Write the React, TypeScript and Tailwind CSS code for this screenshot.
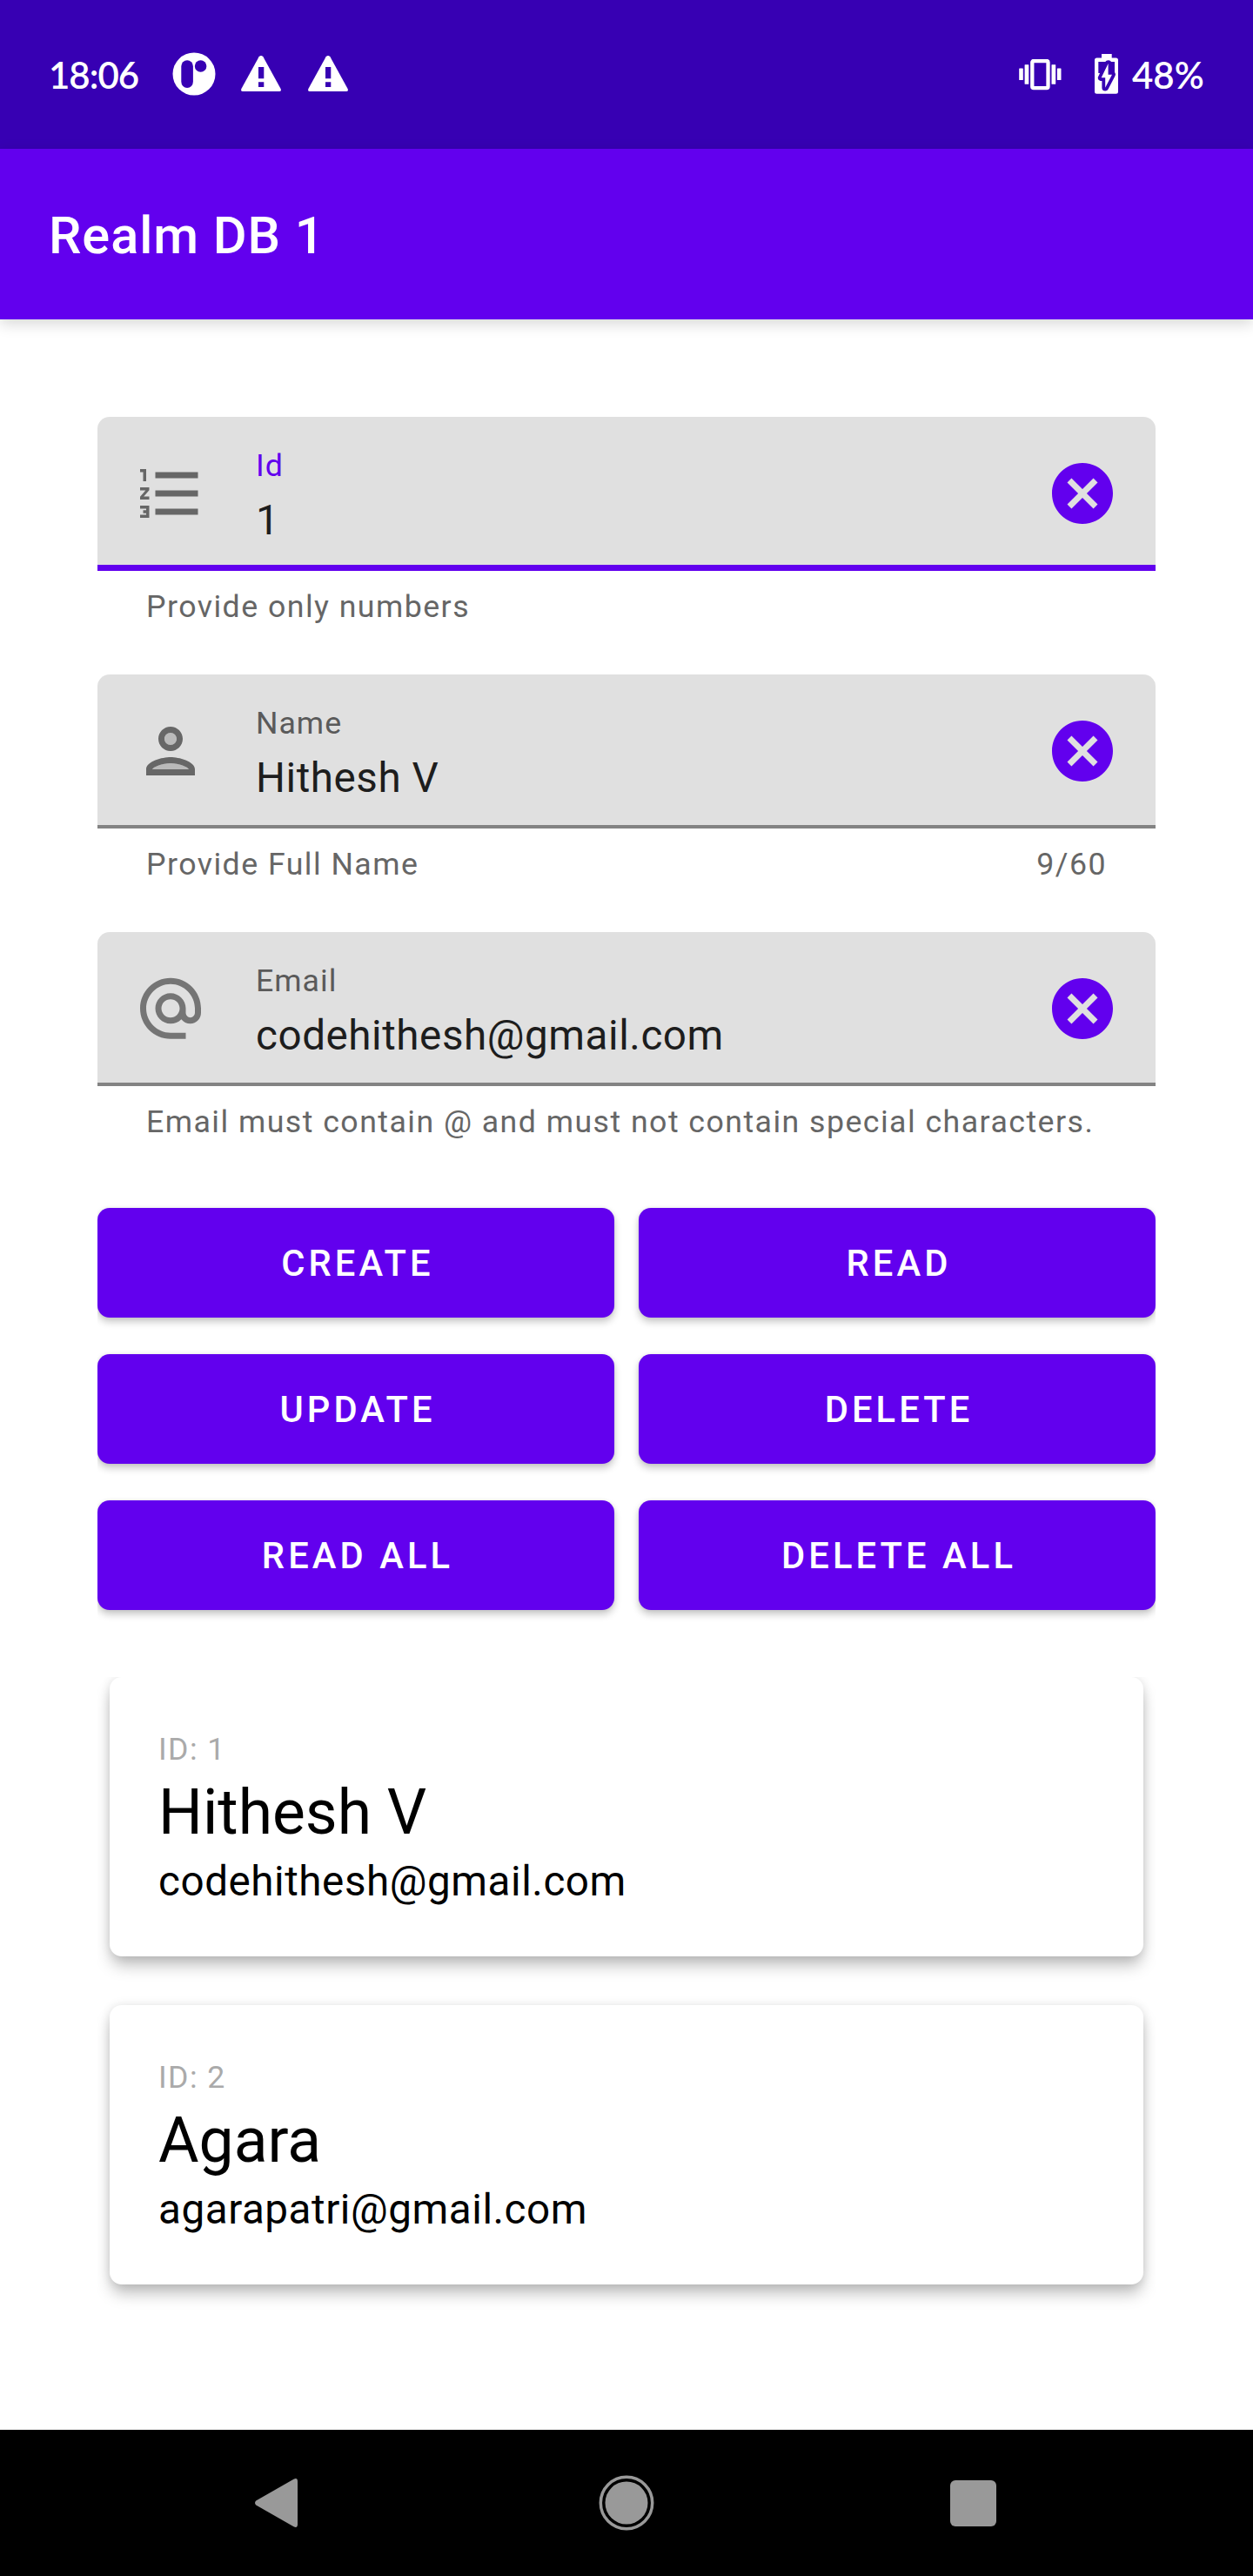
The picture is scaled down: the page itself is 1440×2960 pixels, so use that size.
import type { ReactNode } from "react";

function RoundLogo() {
  return (
    <svg width="50" height="50" viewBox="0 0 50 50">
      <circle cx="25" cy="25" r="24.5" fill="#fff" />
      <rect x="10.3" y="9.3" width="13.6" height="31.6" rx="6.8" fill="#3700b3" />
      <circle cx="32.6" cy="16" r="6.8" fill="#3700b3" />
    </svg>
  );
}

function Warning() {
  return (
    <svg width="46" height="42" viewBox="0 0 46 42">
      <path
        d="M20.6 1.3Q23-1.2 25.4 1.3L45.6 38Q46.6 41 44 41H2Q-.6 41 .4 38Z"
        fill="#fff"
      />
      <path d="M20 13h6.3v13.3H20zM20 30.2h6.3v5.8H20z" fill="#3700b3" />
    </svg>
  );
}

function Vibrate() {
  return (
    <svg width="49" height="36" viewBox="0 0 49 36" fill="#fff">
      <rect x="0.2" y="10.5" width="4.6" height="13.6" rx="0.6" />
      <rect x="6.6" y="6.2" width="4.7" height="22.6" rx="0.6" />
      <rect x="15.3" y="2" width="18.2" height="31.2" rx="1.6" fill="none" stroke="#fff" strokeWidth="4.3" />
      <rect x="37.5" y="6.2" width="4.7" height="22.6" rx="0.6" />
      <rect x="43.9" y="10.5" width="4.6" height="13.6" rx="0.6" />
    </svg>
  );
}

function Battery() {
  return (
    <svg width="27" height="46" viewBox="0 0 27 46">
      <path d="M8 0h11.7v4.6H24.500q2.500 0 2.500 2.500v36.100q0 2.500-2.500 2.500H2.500q-2.500 0-2.500-2.500V7.100q0-2.500 2.500-2.500H8z" fill="#fff" />
      <path d="M4.300 9h18.700v13H4.300z" fill="#3700b3" />
      <path
        d="M15.600 11 7.700 27.300H12.200V38.700L20 23.700H15.600Z"
        fill="#3700b3"
        stroke="#3700b3"
        strokeWidth="7.600"
        strokeLinejoin="round"
      />
      <path d="M15.600 11 7.700 27.300H12.200V38.700L20 23.700H15.600Z" fill="#fff" />
    </svg>
  );
}

function ListNumbered() {
  return (
    <svg width="84" height="84" viewBox="0 0 24 24" fill="#676767">
      <path d="M2 17h2v.5H3v1h1v.5H2v1h3v-4H2v1zm1-9h1V4H2v1h1v3zm-1 3h1.800L2 13.100v.9h3v-1H3.200L5 10.900V10H2v1zm5-6v2h14V5H7zm0 14h14v-2H7v2zm0-6h14v-2H7v2z" />
    </svg>
  );
}

function Person() {
  return (
    <svg width="84" height="84" viewBox="0 0 24 24" fill="#676767">
      <path d="M12 16c-2.690 0-5.770 1.280-6 2h12c-.2-.71-3.300-2-6-2z" fill="#bababa" />
      <circle cx="12" cy="8" r="2" fill="#bababa" />
      <path d="M12 14c-2.670 0-8 1.340-8 4v2h16v-2c0-2.660-5.330-4-8-4zm-6 4c.22-.72 3.310-2 6-2 2.700 0 5.800 1.290 6 2H6zm6-6c2.210 0 4-1.790 4-4s-1.790-4-4-4-4 1.790-4 4 1.790 4 4 4zm0-6c1.100 0 2 .9 2 2s-.9 2-2 2-2-.9-2-2 .9-2 2-2z" />
    </svg>
  );
}

function At() {
  return (
    <svg width="84" height="84" viewBox="0 0 24 24" fill="#757575">
      <path d="M12 1.950c-5.520 0-10 4.480-10 10s4.480 10 10 10h5v-2h-5c-4.340 0-8-3.660-8-8s3.660-8 8-8 8 3.660 8 8v1.430c0 .79-.71 1.570-1.500 1.570s-1.500-.78-1.500-1.570v-1.430c0-2.760-2.240-5-5-5s-5 2.240-5 5 2.240 5 5 5c1.380 0 2.640-.56 3.540-1.470.65.89 1.770 1.470 2.960 1.470 1.970 0 3.500-1.600 3.500-3.570v-1.430c0-5.520-4.480-10-10-10zm0 13c-1.660 0-3-1.340-3-3s1.340-3 3-3 3 1.340 3 3-1.340 3-3 3z" />
    </svg>
  );
}

function Clear() {
  return (
    <svg width="84" height="84" viewBox="0 0 24 24" fill="#6200ee">
      <path d="M12 2C6.470 2 2 6.470 2 12s4.470 10 10 10 10-4.470 10-10S17.530 2 12 2zm5 13.590L15.590 17 12 13.410 8.410 17 7 15.590 10.590 12 7 8.410 8.410 7 12 10.590 15.590 7 17 8.410 13.410 12 17 15.590z" />
    </svg>
  );
}

type FieldProps = {
  icon: ReactNode;
  label: string;
  value: string;
  helper: string;
  counter?: string;
  focused?: boolean;
};

function Field({ icon, label, value, helper, counter, focused }: FieldProps) {
  return (
    <div className="h-[296px]">
      <div
        className={`flex h-[177px] justify-between rounded-t-[14px] bg-[#e0e0e0] pr-[42px] pl-[42px] ${
          focused
            ? "shadow-[inset_0_-7px_0_#6200ee]"
            : "shadow-[inset_0_-4px_0_#838383]"
        }`}
      >
        <div className="flex">
          <div className="pt-[46px]">{icon}</div>
          <div className="ml-[56px] pt-[35px]">
            <div
              className={`text-[35.7px] leading-[42px] tracking-[1px] ${
                focused ? "text-[#6200ee]" : "text-[#5a5a5a]"
              }`}
            >
              {label}
            </div>
            <div className="mt-[14px] text-[47.6px] leading-[56px] tracking-[0.55px] text-[#1d1d1d]">
              {value}
            </div>
          </div>
        </div>
        <div className="pt-[46px]">
          <Clear />
        </div>
      </div>
      <div className="flex justify-between px-[56px] pt-[20px] text-[35.7px] leading-[42px] tracking-[1.46px] text-[#666]">
        <span className="whitespace-nowrap">{helper}</span>
        {counter && <span>{counter}</span>}
      </div>
    </div>
  );
}

function Card({ id, name, email }: { id: number; name: string; email: string }) {
  return (
    <div className="h-[321px] rounded-[14px] bg-white px-[56px] pt-[62px] shadow-[0_12px_18px_-2px_rgba(0,0,0,0.26),0_0_12px_rgba(0,0,0,0.1)]">
      <div className="text-[35.7px] leading-[42px] tracking-[1.4px] text-[#aaa]">ID: {id}</div>
      <div className="mt-[10px] text-[71.4px] leading-[84px] text-black">{name}</div>
      <div className="mt-[9px] text-[47.6px] leading-[56px] tracking-[0.55px] text-black">{email}</div>
    </div>
  );
}

const actions = ["CREATE", "READ", "UPDATE", "DELETE", "READ ALL", "DELETE ALL"];

export default function App() {
  return (
    <div className="flex h-[2960px] w-[1440px] flex-col overflow-hidden bg-white font-['Roboto',sans-serif]">
      <div className="flex h-[171px] shrink-0 items-start justify-between bg-[#3700b3] pr-[56px] pl-[56px] text-white">
        <div className="flex">
          <div className="mt-[60px] w-[142px] font-['Lato',sans-serif] text-[42px] leading-[52px] font-semibold tracking-[-1px]">
            18:06
          </div>
          <div className="mt-[60px]">
            <RoundLogo />
          </div>
          <div className="mt-[64px] ml-[29px]">
            <Warning />
          </div>
          <div className="mt-[64px] ml-[31px]">
            <Warning />
          </div>
        </div>
        <div className="flex">
          <div className="mt-[68px]">
            <Vibrate />
          </div>
          <div className="mt-[62px] ml-[38px]">
            <Battery />
          </div>
          <div className="mt-[60px] ml-[16px] w-[83px] font-['Lato',sans-serif] text-[42px] leading-[52px] font-semibold">
            48%
          </div>
        </div>
      </div>

      <div className="flex h-[196px] shrink-0 items-center bg-[#6200ee] px-[56px] pt-[5px] text-[59.5px] font-medium tracking-[0.92px] text-white shadow-[0_5px_16px_rgba(0,0,0,0.16)]">
        Realm DB 1
      </div>

      <div className="flex grow flex-col px-[112px] pt-[112px]">
        <Field icon={<ListNumbered />} label="Id" value="1" helper="Provide only numbers" focused />
        <Field icon={<Person />} label="Name" value="Hithesh V" helper="Provide Full Name" counter="9/60" />
        <Field
          icon={<At />}
          label="Email"
          value="codehithesh@gmail.com"
          helper="Email must contain @ and must not contain special characters."
        />

        <div className="mt-[21px] grid grid-cols-2 gap-x-[28px] gap-y-[42px] overflow-x-clip">
          {actions.map((label) => (
            <button
              key={label}
              className="h-[126px] rounded-[14px] bg-[#6200ee] pt-[3px] pl-[4px] text-[41.65px] font-medium tracking-[4.1px] text-white shadow-[0_5px_9px_rgba(0,0,0,0.22),0_0_4px_rgba(0,0,0,0.08)]"
            >
              {label}
            </button>
          ))}
        </div>

        <div className="mt-[77px] flex h-[760px] flex-col gap-[56px] overflow-hidden px-[14px]">
          <Card id={1} name="Hithesh V" email="codehithesh@gmail.com" />
          <Card id={2} name="Agara" email="agarapatri@gmail.com" />
        </div>
      </div>

      <div className="flex h-[168px] shrink-0 items-center bg-black pl-[292px]">
        <svg width="51" height="56" viewBox="0 0 51 56">
          <path d="M45.500.8Q50 -1.500 50 3.500V52.500Q50 57.500 45.500 55.200L2.200 30.500Q-.2 28 2.200 25.500Z" fill="#999" />
        </svg>
        <svg className="ml-[345px]" width="64" height="64" viewBox="0 0 64 64">
          <circle cx="32" cy="32" r="29.700" fill="none" stroke="#999" strokeWidth="3.500" />
          <circle cx="32" cy="32" r="24.500" fill="#999" />
        </svg>
        <div className="ml-[340px] h-[53px] w-[53px] rounded-[6px] bg-[#999]" />
      </div>
    </div>
  );
}
